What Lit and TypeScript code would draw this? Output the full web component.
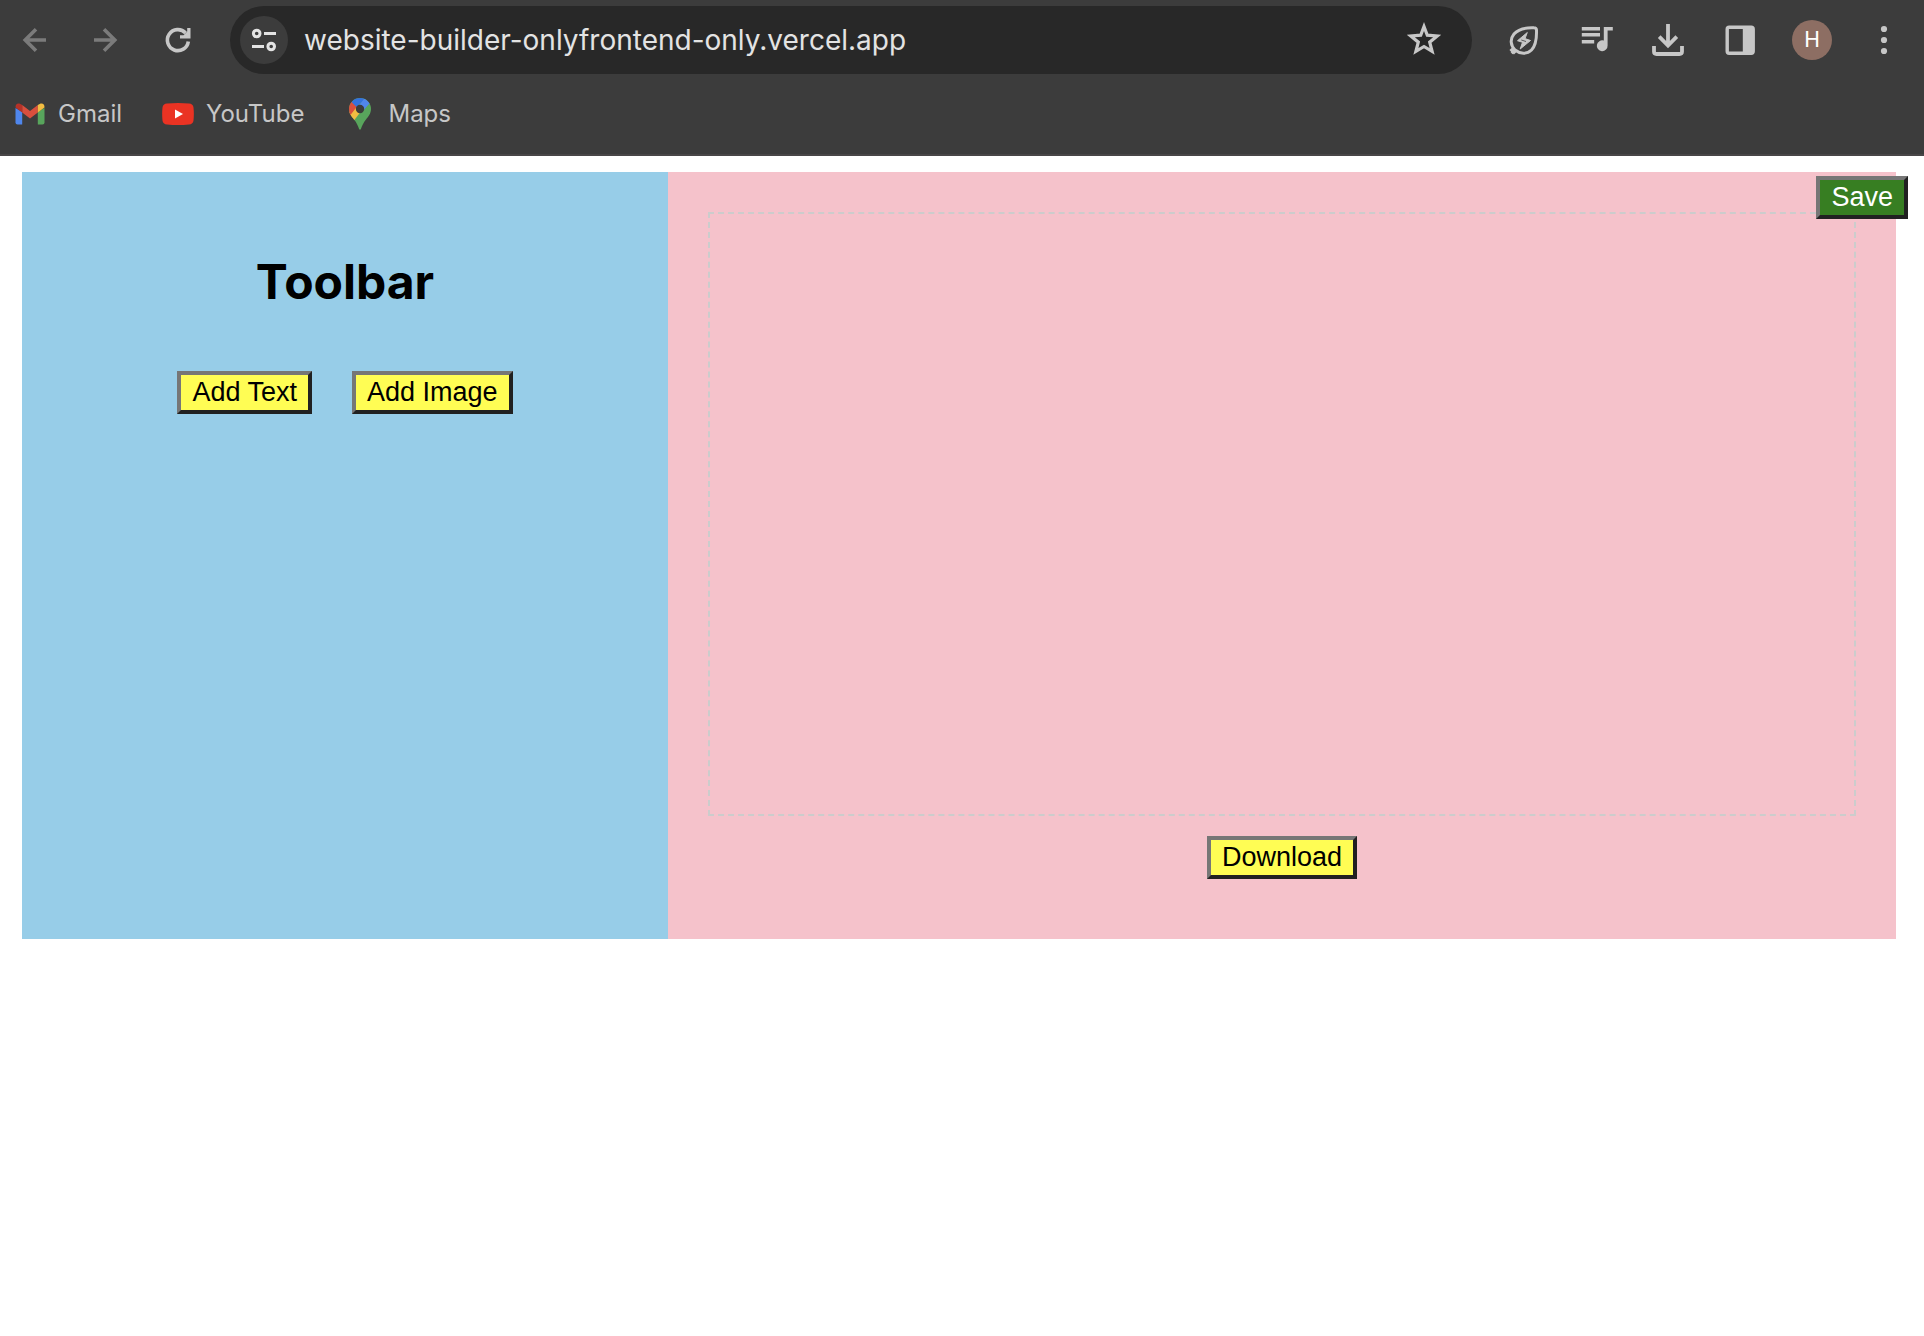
import { LitElement, html, css, svg } from "lit";
import { customElement } from "lit/decorators.js";

const icons = {
  back: svg`<path d="M36 24H15M26 13.200L15.200 24L26 34.800" fill="none" stroke="currentColor" stroke-width="3.600"/>`,
  forward: svg`<path d="M12 24H33M22 13.200L32.800 24L22 34.800" fill="none" stroke="currentColor" stroke-width="3.600"/>`,
  reload: svg`<path d="M34.300 25.500A10.500 10.500 0 1 1 31.600 17" fill="none" stroke="currentColor" stroke-width="3.600"/><path d="M36.500 12V22.500H26V19.200H29.500L33.200 15.500V12Z" fill="currentColor"/>`,
  tune: svg`<g fill="none" stroke="currentColor" stroke-width="3"><circle cx="16.700" cy="17.500" r="3.300"/><path d="M24 17.500H36M12 30.500H24"/><circle cx="31.200" cy="30.500" r="3.300"/></g>`,
  star: svg`<path d="M24 10.500L27.300 19.200L37.200 20L29.700 26.200L32.100 35.400L24 30.500L15.900 35.400L18.300 26.200L10.800 20L20.700 19.200Z" fill="none" stroke="currentColor" stroke-width="3.200"/>`,
  leaf: svg`<path d="M15 34C10.500 29.500 9.800 23 14 18C18.800 12.500 27 11.500 34 11.800Q36.300 11.800 36.500 14C36.800 23 35.500 30 31.500 34C27 38.500 20 38 15 34ZM15.500 34L11.500 37.200M10.500 33L15 37.500" fill="none" stroke="currentColor" stroke-width="3"/><path d="M27.300 16.500L17.500 24.700L22.500 26.300L20.200 33L30.500 24.500L25 22.600Z" fill="currentColor" stroke="currentColor" stroke-width="1" stroke-linejoin="round"/><path d="M21.300 24L26 25.500" stroke="#3c3c3c" stroke-width="0.800"/>`,
  music: svg`<path d="M9.800 11H28V14.600H9.800ZM9.800 17H28V20.600H9.800ZM9.800 24H22.200V27.500H9.800ZM31.800 11H40.800V14.600H35.600V29.500A5.400 5.400 0 1 1 31.800 24.600Z" fill="currentColor"/>`,
  download: svg`<path d="M24 8V29M15.200 20.700L24 29.500L32.800 20.700M10 30V35.500Q10 38 12.500 38H35.500Q38 38 38 35.500V30" fill="none" stroke="currentColor" stroke-width="3.800"/>`,
  panel: svg`<rect x="11.200" y="11.200" width="26" height="26" rx="2" fill="none" stroke="currentColor" stroke-width="3.400"/><path d="M26.800 11H37V38H26.800Z" fill="currentColor"/>`,
  more: svg`<g fill="currentColor"><circle cx="24" cy="13" r="3.100"/><circle cx="24" cy="24" r="3.100"/><circle cx="24" cy="35" r="3.100"/></g>`,
};

const gmailLogo = svg`
  <path d="M1.500 10V24.500Q1.500 26.500 3.500 26.500H8.200V14Z" fill="#4f86ec"/>
  <path d="M30.500 10V24.500Q30.500 26.500 28.500 26.500H23.800V14Z" fill="#58a55c"/>
  <path d="M8.200 7L16 13L23.800 7V14.500L16 20.500L8.200 14.500Z" fill="#d94f3d"/>
  <path d="M8.200 7V14.500L1.500 9.500C1.300 5.500 4.600 4 8.200 7Z" fill="#b53228"/>
  <path d="M23.800 7V14.500L30.500 9.500C30.700 5.500 27.400 4 23.800 7Z" fill="#f2bd42"/>`;

const youtubeLogo = svg`
  <path d="M5 5.500Q16 4.500 27 5.500Q31 5.800 31.500 9.500Q32.200 16 31.500 22.500Q31 26.200 27 26.500Q16 27.500 5 26.500Q1 26.200 .500 22.500Q-.200 16 .500 9.500Q1 5.800 5 5.500Z" fill="#ea3323"/>
  <path d="M13 11.500L21 16L13 20.500Z" fill="#fff"/>`;

const mapsLogo = svg`
  <clipPath id="pin"><path d="M16 0A11 11 0 0 1 27 11C27 15.500 24.500 18.500 22 21.500C19.500 24.500 18 28 17 30.800Q16 32.800 15 30.800C14 28 12.500 24.500 10 21.500C7.500 18.500 5 15.500 5 11A11 11 0 0 1 16 0Z"/></clipPath>
  <g clip-path="url(#pin)">
    <path d="M0 0H32V32H0Z" fill="#58a55c"/>
    <path d="M0 20L10.500 8H21L10 22.500L4 28Z" fill="#f2bd42"/>
    <path d="M0 0L7.500 3.500L13 8.500L6.500 17L0 20Z" fill="#d94f3d"/>
    <path d="M7.500 4L10 0H21L20.500 1.500L12.500 9Z" fill="#3372de"/>
    <path d="M20 1L30 0V4L25 6L18 14L12.500 10.500Z" fill="#5086ec"/>
  </g>
  <circle cx="16" cy="11" r="4.200" fill="#3c3c3c"/>`;

@customElement("browser-bar")
export class BrowserBar extends LitElement {
  static styles = css`
    :host {
      display: block;
      background: #3c3c3c;
      border-bottom: 2px solid #484647;
      color: #c7c7c7;
      font-family: Inter, "Liberation Sans", sans-serif;
    }
    .row {
      display: flex;
      align-items: center;
      gap: 28px;
      height: 80px;
      padding: 0 16px 0 10px;
      box-sizing: border-box;
    }
    .group {
      display: flex;
      align-items: center;
      gap: 24px;
    }
    button {
      display: grid;
      place-items: center;
      flex: none;
      width: 48px;
      height: 48px;
      padding: 0;
      border: 0;
      border-radius: 50%;
      background: none;
      color: inherit;
      font: inherit;
    }
    button:disabled {
      color: #7b7b7b;
    }
    .glyph {
      display: block;
      width: 48px;
      height: 48px;
    }
    .address {
      display: flex;
      align-items: center;
      flex: 1;
      min-width: 0;
      height: 68px;
      padding: 0 24px 0 10px;
      border-radius: 34px;
      box-sizing: border-box;
      background: #282828;
    }
    .site {
      background: #3c3c3c;
      color: #e3e3e3;
    }
    .url {
      flex: 1;
      min-width: 0;
      padding: 0 16px;
      border: 0;
      outline: 0;
      background: none;
      color: #e3e3e3;
      font: 28px/36px Inter, "Liberation Sans", sans-serif;
    }
    .avatar {
      display: grid;
      place-items: center;
      width: 40px;
      height: 40px;
      border-radius: 50%;
      background: #8d6e63;
      color: #fff;
      font: 22px/40px Roboto, "Liberation Sans", sans-serif;
    }
    .bookmarks {
      display: flex;
      gap: 40px;
      padding: 16px 14px 22px;
    }
    .bookmark {
      display: flex;
      align-items: center;
      gap: 12px;
      color: inherit;
      font-size: 24px;
      line-height: 36px;
      text-decoration: none;
    }
    .logo {
      width: 32px;
      height: 32px;
    }
  `;

  private icon(name: keyof typeof icons) {
    return html`<svg class="glyph" viewBox="0 0 48 48" aria-hidden="true">${icons[name]}</svg>`;
  }

  private bookmark(label: string, href: string, logo: unknown) {
    return html`<a class="bookmark" href=${href}
      ><svg class="logo" viewBox="0 0 32 32" aria-hidden="true">${logo}</svg><span>${label}</span></a
    >`;
  }

  render() {
    return html`
      <div class="row">
        <div class="group">
          <button aria-label="Back" disabled>${this.icon("back")}</button>
          <button aria-label="Forward" disabled>${this.icon("forward")}</button>
          <button aria-label="Reload">${this.icon("reload")}</button>
        </div>
        <div class="address">
          <button class="site" aria-label="Site information">${this.icon("tune")}</button>
          <input class="url" type="text" aria-label="Address" spellcheck="false"
            .value=${"website-builder-onlyfrontend-only.vercel.app"} />
          <button aria-label="Bookmark this page">${this.icon("star")}</button>
        </div>
        <div class="group">
          <button aria-label="Energy saver">${this.icon("leaf")}</button>
          <button aria-label="Media controls">${this.icon("music")}</button>
          <button aria-label="Downloads">${this.icon("download")}</button>
          <button aria-label="Side panel">${this.icon("panel")}</button>
          <button aria-label="Profile"><span class="avatar">H</span></button>
          <button aria-label="Menu">${this.icon("more")}</button>
        </div>
      </div>
      <nav class="bookmarks" aria-label="Bookmarks">
        ${this.bookmark("Gmail", "#gmail", gmailLogo)}
        ${this.bookmark("YouTube", "#youtube", youtubeLogo)}
        ${this.bookmark("Maps", "#maps", mapsLogo)}
      </nav>
    `;
  }
}

@customElement("site-builder")
export class SiteBuilder extends LitElement {
  static styles = css`
    :host {
      display: block;
      padding: 16px 28px 16px 22px;
      color: #000;
      font-family: Inter, "Liberation Sans", sans-serif;
    }
    .builder {
      position: relative;
      display: grid;
      grid-template-columns: 646fr 1228fr;
    }
    .tools {
      padding: 80px 40px 40px;
      background: #97cde8;
      text-align: center;
    }
    .title {
      margin: 0 0 59px;
      font-size: 48px;
      line-height: 60px;
      font-weight: 700;
    }
    .actions {
      display: flex;
      justify-content: center;
      gap: 40px;
    }
    .canvas {
      display: flex;
      flex-direction: column;
      align-items: center;
      gap: 20px;
      padding: 40px 40px 60px;
      background: #f5c2cb;
    }
    .drop {
      align-self: stretch;
      min-height: 600px;
      border: 2px dashed #ccc;
    }
    .action {
      padding: 2px 11px;
      border: 4px solid;
      border-color: #767676 #212121 #212121 #767676;
      background: #fffd54;
      color: #000;
      font: 27px/31px "Liberation Sans", Arial, sans-serif;
    }
    .save {
      position: absolute;
      top: 4px;
      right: -12px;
      background: #377e22;
      color: #fff;
    }
  `;

  render() {
    return html`
      <main class="builder">
        <section class="tools">
          <h2 class="title">Toolbar</h2>
          <div class="actions">
            <button class="action">Add Text</button>
            <button class="action">Add Image</button>
          </div>
        </section>
        <section class="canvas">
          <div class="drop"></div>
          <button class="action">Download</button>
        </section>
        <button class="action save">Save</button>
      </main>
    `;
  }
}

@customElement("app-root")
export class AppRoot extends LitElement {
  static styles = css`
    :host {
      display: block;
      min-height: 100vh;
      background: #fff;
    }
  `;

  render() {
    return html`<browser-bar></browser-bar><site-builder></site-builder>`;
  }
}
